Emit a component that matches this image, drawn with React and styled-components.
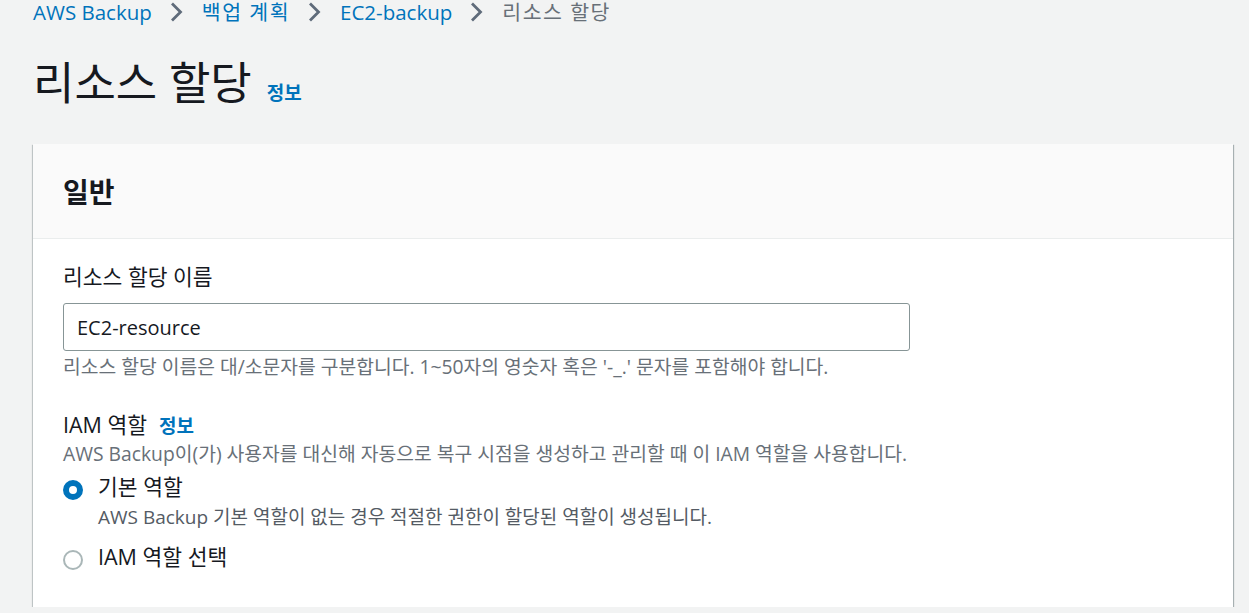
import React from "react";
import styled, { createGlobalStyle } from "styled-components";

const GlobalStyle = createGlobalStyle`
  html, body {
    margin: 0;
    padding: 0;
    background: #f2f3f3;
    font-family: "Open Sans", "Noto Sans CJK KR", sans-serif;
    color: #16191f;
  }
`;

const Page = styled.div`
  padding: 0 16px 0 33px;
`;

const Crumbs = styled.nav`
  display: flex;
  align-items: center;
  height: 24px;
  font-size: 20.5px;
  line-height: 24px;
`;

const Crumb = styled.span`
  color: ${(p) => (p.$current ? "#687078" : "#0073bb")};
  letter-spacing: ${(p) => (p.$ko ? "1.5px" : "0")};
`;

const Chevron = styled.svg`
  width: 15px;
  height: 22px;
  margin: 0 18px 0 17px;
  color: #5f6b7a;
`;

const TitleRow = styled.div`
  display: flex;
  align-items: baseline;
  gap: 15px;
  margin-top: 31px;
  height: 56px;
`;

const Title = styled.h1`
  margin: 0;
  font-size: 45px;
  font-weight: 400;
  line-height: 56px;
`;

const Info = styled.span`
  color: #0073bb;
  font-weight: 700;
  font-size: ${(p) => p.$size || 19}px;
  letter-spacing: 0;
`;

const Card = styled.section`
  margin-top: 33px;
  background: #fff;
  box-shadow: 0 1px 1px 0 rgba(0, 28, 36, 0.45), 1px 1px 1px 0 rgba(0, 28, 36, 0.25),
    -1px 1px 1px 0 rgba(0, 28, 36, 0.15);
`;

const CardHeader = styled.header`
  height: 95px;
  box-sizing: border-box;
  background: #fafafa;
  border-bottom: 1px solid #eaeded;
  display: flex;
  align-items: center;
  padding: 0 30px;
`;

const CardTitle = styled.h2`
  margin: 0;
  font-size: 28px;
  font-weight: 700;
`;

const CardBody = styled.div`
  padding: 23px 30px 35px;
`;

const Field = styled.div`
  display: flex;
  flex-direction: column;
  margin-bottom: ${(p) => p.$gap || 0}px;
`;

const Label = styled.div`
  display: flex;
  align-items: baseline;
  gap: 12px;
  font-size: 21.5px;
  line-height: 30px;
  margin-bottom: ${(p) => p.$mb || 0}px;
`;

const Input = styled.input`
  box-sizing: border-box;
  width: 847px;
  height: 48px;
  border: 1px solid #879596;
  border-radius: 3px;
  padding: 0 13px;
  font-family: inherit;
  font-size: 20px;
  color: #16191f;
  outline: none;
`;

const Hint = styled.div`
  font-size: 19.3px;
  line-height: 26px;
  color: #687078;
  margin-top: ${(p) => p.$mt || 0}px;
`;

const RadioGroup = styled.div`
  display: flex;
  flex-direction: column;
  gap: 12px;
  margin-top: 5px;
`;

const RadioItem = styled.label`
  display: grid;
  grid-template-columns: 20px 1fr;
  column-gap: 15px;
  row-gap: 2px;
  align-items: center;
`;

const RadioDot = styled.span`
  box-sizing: border-box;
  width: 20px;
  height: 20px;
  margin-top: 5px;
  border-radius: 50%;
  border: ${(p) => (p.$checked ? "6px solid #0073bb" : "2px solid #aab7b8")};
  background: #fff;
`;

const RadioText = styled.span`
  font-size: 21.5px;
  line-height: 30px;
`;

const RadioDesc = styled.span`
  grid-column: 2;
  font-size: 19px;
  line-height: 26px;
  color: #545b64;
`;

const ChevronIcon = () => (
  <Chevron viewBox="0 0 15 22" fill="none">
    <path d="M3 2.5l8.5 8.5-8.5 8.5" stroke="currentColor" strokeWidth="2.8" />
  </Chevron>
);

export default function App() {
  return (
    <>
      <GlobalStyle />
      <Page>
        <Crumbs>
          <Crumb>AWS Backup</Crumb>
          <ChevronIcon />
          <Crumb $ko>백업 계획</Crumb>
          <ChevronIcon />
          <Crumb>EC2-backup</Crumb>
          <ChevronIcon />
          <Crumb $ko $current>리소스 할당</Crumb>
        </Crumbs>
        <TitleRow>
          <Title>리소스 할당</Title>
          <Info>정보</Info>
        </TitleRow>
        <Card>
          <CardHeader>
            <CardTitle>일반</CardTitle>
          </CardHeader>
          <CardBody>
            <Field $gap={30}>
              <Label $mb={11}>리소스 할당 이름</Label>
              <Input defaultValue="EC2-resource" />
              <Hint $mt={3}>
                리소스 할당 이름은 대/소문자를 구분합니다. 1~50자의 영숫자 혹은 '-_.' 문자를 포함해야 합니다.
              </Hint>
            </Field>
            <Field>
              <Label>
                IAM 역할 <Info>정보</Info>
              </Label>
              <Hint>
                AWS Backup이(가) 사용자를 대신해 자동으로 복구 시점을 생성하고 관리할 때 이 IAM 역할을 사용합니다.
              </Hint>
              <RadioGroup>
                <RadioItem>
                  <RadioDot $checked />
                  <RadioText>기본 역할</RadioText>
                  <RadioDesc>
                    AWS Backup 기본 역할이 없는 경우 적절한 권한이 할당된 역할이 생성됩니다.
                  </RadioDesc>
                </RadioItem>
                <RadioItem>
                  <RadioDot />
                  <RadioText>IAM 역할 선택</RadioText>
                </RadioItem>
              </RadioGroup>
            </Field>
          </CardBody>
        </Card>
      </Page>
    </>
  );
}
